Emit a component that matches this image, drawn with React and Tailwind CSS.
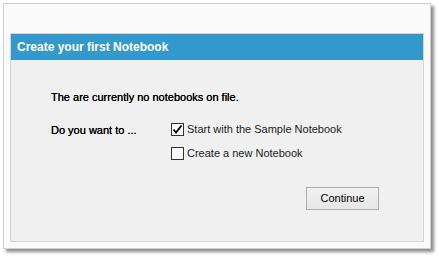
import { useState } from "react";

function Check({ checked, label, onToggle }) {
  return (
    <label className="flex items-center gap-[3px] h-[13px] cursor-default" onClick={onToggle}>
      <span className="flex h-[13px] w-[13px] items-center justify-center border border-[#333333] bg-white">
        {checked && (
          <svg width="11" height="11" viewBox="0 0 11 11">
            <path d="M1.5 5.5 L4 8.5 L9.5 1.5" fill="none" stroke="#000" strokeWidth="1.8" />
          </svg>
        )}
      </span>
      <span className="text-[11px] text-[#1a1a1a]">{label}</span>
    </label>
  );
}

export default function App() {
  const [sample, setSample] = useState(true);
  const [fresh, setFresh] = useState(false);

  return (
    <div className="h-[257px] w-[439px] bg-white pl-[3px] pt-[3px] font-['Liberation_Sans',Arial,sans-serif]">
      <div className="h-[246px] w-[428px] border border-[#cfcfcf] bg-[#fafafa] pl-[6px] pt-[29px] shadow-[3px_3px_3px_rgba(0,0,0,0.45)]">
        <div className="h-[209px] w-[414px] border border-[#d4d4d4] bg-[#f0f0f0]">
          <div className="flex h-[26px] items-center bg-[#3399cc] pl-[6px] text-[12px] font-bold text-white">
            Create your first Notebook
          </div>
          <div className="pl-[40px] pt-[29px] text-[11px] text-black">
            <p className="h-[16px] leading-[16px] [text-shadow:0_0_0.3px_#000]">The are currently no notebooks on file.</p>
            <div className="mt-[17px] flex">
              <p className="w-[120px] leading-[16px] [text-shadow:0_0_0.3px_#000]">Do you want to ...</p>
              <div className="flex flex-col gap-[11px] pt-[1px]">
                <Check checked={sample} label="Start with the Sample Notebook" onToggle={() => setSample(!sample)} />
                <Check checked={fresh} label="Create a new Notebook" onToggle={() => setFresh(!fresh)} />
              </div>
            </div>
            <div className="mt-[27px] flex justify-end pr-[44px]">
              <button className="h-[23px] w-[73px] border border-[#adadad] bg-[linear-gradient(#f2f2f2,#e6e6e6)] text-[11px] text-black">
                Continue
              </button>
            </div>
          </div>
        </div>
      </div>
    </div>
  );
}
